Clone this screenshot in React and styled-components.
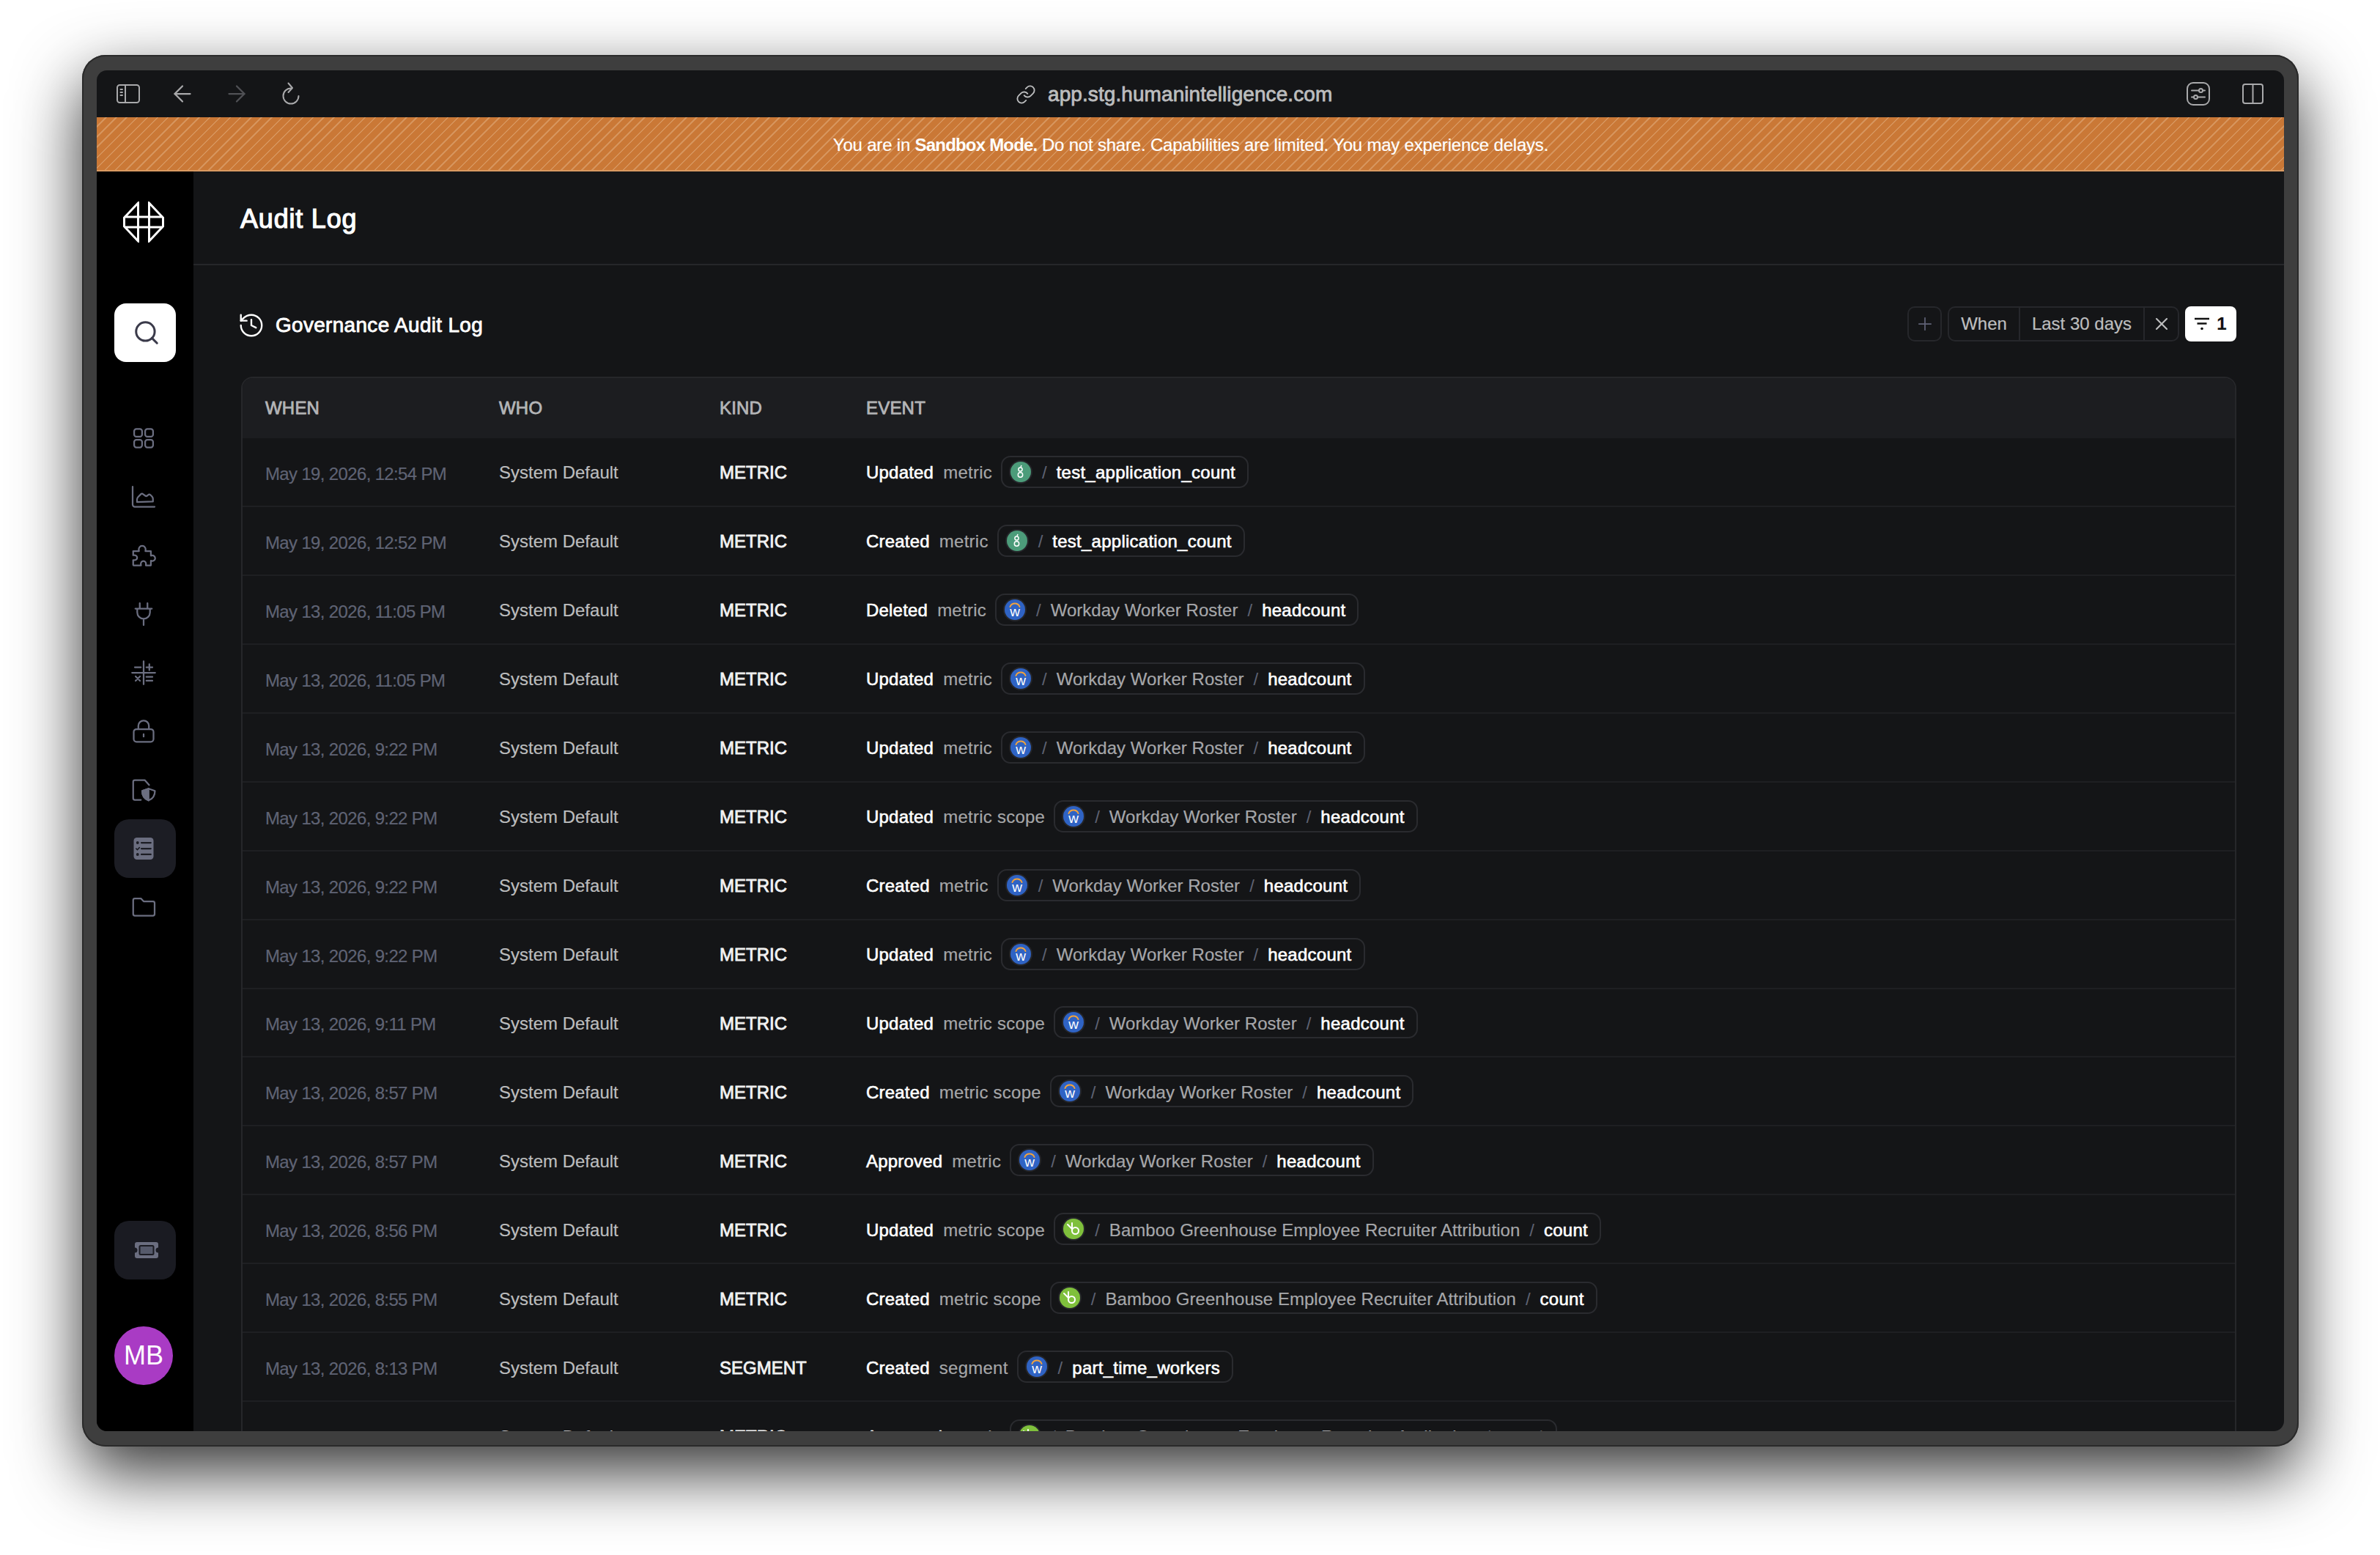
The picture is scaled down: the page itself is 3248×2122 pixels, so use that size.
import styled, { createGlobalStyle, css } from 'styled-components'
import { ArrowLeft, ArrowRight, History, Link, Plus, Search, X } from 'lucide-react'

const GlobalStyle = createGlobalStyle`
  html, body {
    margin: 0;
    background: #fff;
    font-family: "Liberation Sans", Arial, sans-serif;
  }
  * { box-sizing: border-box; }
`

const regular = css`
  -webkit-text-stroke: 0.2px currentColor;
`
const medium = css`
  -webkit-text-stroke: 0.6px currentColor;
`
const heavy = css`
  -webkit-text-stroke: 0.8px currentColor;
`

const Page = styled.div`
  width: 3248px;
  height: 2122px;
  padding: 75px 111px 148px 112px;
  overflow: hidden;
  background: #fff;
`
const Frame = styled.div`
  height: 100%;
  padding: 21px 20px;
  border-radius: 32px;
  background: #3e3e3e;
  box-shadow: inset 0 0 0 2px #2a2a2a, 0 35px 90px rgba(0, 0, 0, 0.8);
`
const Screen = styled.div`
  display: flex;
  flex-direction: column;
  height: 100%;
  overflow: hidden;
  border-radius: 14px;
  background: #141517;
`
const Toolbar = styled.div`
  flex: none;
  display: grid;
  grid-template-columns: 1248px 1fr auto;
  align-items: center;
  height: 64px;
  padding: 0 6px;
  color: #a9a9ab;
`
const ToolGroup = styled.div`
  display: flex;
  align-items: center;
`
const ToolButton = styled.div`
  display: flex;
  align-items: center;
  justify-content: center;
  width: 74px;
  color: ${(p) => (p.$dim ? '#505155' : 'inherit')};
`
const Url = styled.div`
  display: flex;
  align-items: center;
  gap: 16px;
  padding-top: 2px;
  font-size: 28px;
  letter-spacing: 0.08px;
  color: #bcbdbe;
  ${heavy}
`
const Banner = styled.div`
  flex: none;
  height: 74px;
  display: flex;
  align-items: center;
  justify-content: center;
  padding: 3px 0 0 1px;
  font-size: 24px;
  letter-spacing: -0.2px;
  color: #fff;
  border-bottom: 2px solid #d99a62;
  background: repeating-linear-gradient(135deg, #ca7836 0 8.2px, #d6945c 8.2px 10px);
  ${regular}
  b { font-weight: 700; letter-spacing: -0.8px; -webkit-text-stroke: 0; }
`
const Body = styled.div`
  flex: 1;
  min-height: 0;
  display: flex;
`
const Sidebar = styled.nav`
  flex: none;
  width: 132px;
  display: flex;
  flex-direction: column;
  align-items: flex-start;
  padding: 41px 0 63px 24px;
  background: #000;
`
const Logo = styled.svg`
  display: block;
  width: 56px;
  height: 56px;
  margin: 0 0 83px 12px;
  color: #fff;
`
const SearchButton = styled.div`
  display: flex;
  align-items: center;
  justify-content: center;
  width: 84px;
  height: 80px;
  margin-bottom: 64px;
  padding-left: 4px;
  border-radius: 16px;
  background: #fff;
  color: #3a3a4a;
`
const NavItem = styled.div`
  display: flex;
  align-items: center;
  justify-content: center;
  width: 84px;
  height: 80px;
  padding-right: 4px;
  border-radius: 20px;
  color: #6b6e80;
  background: ${(p) => (p.$active ? '#1c1d24' : 'transparent')};
`
const TicketButton = styled.div`
  display: flex;
  align-items: center;
  justify-content: center;
  width: 84px;
  height: 80px;
  margin-top: auto;
  margin-bottom: 64px;
  padding-left: 4px;
  border-radius: 20px;
  color: #6b6e80;
  background: #1a1b22;
`
const Avatar = styled.div`
  display: flex;
  align-items: center;
  justify-content: center;
  width: 80px;
  height: 80px;
  border-radius: 50%;
  background: #a93bc4;
  color: #fff;
  font-size: 36px;
`
const Main = styled.main`
  flex: 1;
  min-width: 0;
  display: flex;
  flex-direction: column;
`
const Header = styled.header`
  flex: none;
  display: flex;
  align-items: center;
  height: 128px;
  padding: 4px 64px 0;
  border-bottom: 2px solid #26272a;
`
const Title = styled.h1`
  margin: 0;
  font-size: 36px;
  font-weight: 400;
  color: #fff;
  letter-spacing: 0.8px;
  -webkit-text-stroke: 1.2px currentColor;
`
const Content = styled.div`
  flex: 1;
  min-height: 0;
  padding: 56px 65px 0;
`
const SectionBar = styled.div`
  display: flex;
  align-items: center;
  justify-content: space-between;
  height: 48px;
  margin-bottom: 48px;
`
const SectionTitle = styled.h2`
  display: flex;
  align-items: center;
  gap: 14px;
  margin: 3px 0 0 -5px;
  font-size: 28px;
  font-weight: 400;
  letter-spacing: 0.3px;
  color: #fff;
  ${heavy}
  svg { -webkit-text-stroke: 0; }
`
const Filters = styled.div`
  display: flex;
  align-items: stretch;
  gap: 8px;
  height: 48px;
  font-size: 24px;
  color: #bdbebf;
  ${regular}
`
const AddFilter = styled.div`
  display: flex;
  align-items: center;
  justify-content: center;
  width: 47px;
  border: 2px solid #26272b;
  border-radius: 10px;
  color: #5f6276;
`
const FilterGroup = styled.div`
  display: flex;
  border: 2px solid #26272b;
  border-radius: 10px;
`
const FilterPart = styled.div`
  display: flex;
  align-items: center;
  justify-content: center;
  padding: 0 16px;
  & + & { border-left: 2px solid #26272b; }
`
const FilterClose = styled(FilterPart)`
  width: 47px;
  padding: 0;
`
const FilterCount = styled.div`
  display: flex;
  align-items: center;
  justify-content: center;
  gap: 10px;
  width: 70px;
  border-radius: 8px;
  background: #fff;
  color: #111;
  font-weight: 700;
`
const Table = styled.div`
  border: 2px solid #26272a;
  border-bottom: 0;
  border-radius: 16px 16px 0 0;
  overflow: hidden;
`
const HeadRow = styled.div`
  display: grid;
  grid-template-columns: 319px 301px 200px 1fr;
  align-items: center;
  height: 82px;
  padding-left: 31px;
  background: #1c1d20;
  font-size: 24px;
  letter-spacing: 0.2px;
  color: #b4b5b7;
  ${heavy}
`
const Row = styled.div`
  display: grid;
  grid-template-columns: 319px 301px 200px 1fr;
  align-items: center;
  height: 93.95px;
  padding-left: 31px;
  border-bottom: 2px solid #1e1f22;
  font-size: 24px;
`
const When = styled.div`
  padding-top: 6px;
  letter-spacing: -0.65px;
  color: #5f6374;
  ${regular}
`
const Who = styled.div`
  padding-top: 3px;
  color: #bcbdbe;
  ${regular}
`
const Kind = styled.div`
  padding-top: 3px;
  color: #f2f2f2;
  ${heavy}
`
const Event = styled.div`
  display: flex;
  align-items: center;
`
const Verb = styled.span`
  margin-right: 13px;
  padding-top: 3px;
  letter-spacing: 0.2px;
  color: #fff;
  ${medium}
`
const Noun = styled.span`
  margin-right: 12px;
  padding-top: 3px;
  letter-spacing: 0.25px;
  color: #a5a6a8;
  ${regular}
`
const Pill = styled.div`
  display: flex;
  align-items: center;
  gap: 13px;
  height: 44px;
  padding: 0 16px 0 9px;
  border: 2px solid #2a2b2f;
  border-radius: 13px;
  white-space: nowrap;
`
const Source = styled.span`
  padding-top: 3px;
  letter-spacing: 0.03px;
  color: #a6a7aa;
  ${regular}
`
const Slash = styled.span`
  padding-top: 3px;
  color: #5e6272;
`
const Name = styled.span`
  padding-top: 3px;
  letter-spacing: 0.25px;
  color: #fff;
  ${medium}
`
const Badge = styled.svg`
  display: block;
  flex: none;
  width: 32px;
  height: 32px;
  border-radius: 50%;
  background: #25262a;
`

const Line = styled.svg`
  display: block;
  fill: none;
  stroke: currentColor;
  stroke-width: ${(p) => p.$sw || 1.5};
  stroke-linecap: round;
  stroke-linejoin: round;
`

const icon = (children) => (
  <Line width="36" height="36" viewBox="0 0 24 24">{children}</Line>
)

const GridIcon = () => icon(
  <>
    <rect x="3.4" y="3.6" width="7.2" height="7" rx="2" />
    <rect x="13.4" y="3.6" width="7.2" height="7" rx="2" />
    <rect x="3.4" y="13.4" width="7.2" height="7" rx="2" />
    <rect x="13.4" y="13.4" width="7.2" height="7" rx="2" />
  </>
)
const ChartIcon = () => icon(
  <>
    <path d="M2 2.800v16.200a2 2 0 0 0 2 2h18" />
    <path d="M6 16.800v-2.500c0-1 .5-1.700 1.100-2.300l2.400-2.400c.6-.6 1.400-.6 2 0l2 1.400c.5.4 1.200.4 1.700 0l1-.8c.6-.5 1.300-.5 1.900 0l1.500 1.500c.5.600.9 1.400.9 2.300v2.300z" />
  </>
)
const PuzzleIcon = () => icon(
  <path d="M2.500 8h5.300c-.8-3 .9-4.700 2.900-4.700s3.700 1.700 2.900 4.700h5v4.200c2.800-.8 3.900.9 3.900 2.300s-1.100 3.100-3.900 2.300V21h-4.600c.6-2.700-.7-3.900-2.200-3.900s-2.800 1.200-2.200 3.900H3a.5.5 0 0 1-.5-.5v-4.300c2.500.4 3.600-.9 3.600-2.200s-1.100-2.600-3.600-2.200z" />
)
const PlugIcon = () => icon(
  <path d="M8.500 2v4.500M15.500 2v4.500M4.500 7h15M6.200 7v3.500a5.800 5.800 0 0 0 11.600 0V7M12 16.500v5.500" />
)
const CalcIcon = () => icon(
  <path d="M12 1.500v21M1.500 12h21M4 7h5.500M14.500 7h5.500M17.200 4.300v5.400M4.700 15.300l4 4M8.700 15.300l-4 4M14.500 15.800h5.500M14.500 19.300h5.500" />
)
const LockIcon = () => icon(
  <>
    <rect x="3" y="10" width="18" height="11.500" rx="2.500" />
    <path d="M7.200 10V7a4.800 4.800 0 0 1 9.600 0v3M12 14.600v2.200" />
  </>
)
const FileShieldIcon = () => icon(
  <>
    <path d="M9.500 21H4a1.500 1.500 0 0 1-1.500-1.500V4.500A1.500 1.500 0 0 1 4 3h9l4 4.500" />
    <path d="M16.500 10.800l5.800 2c0 4.400-2 7.300-5.800 8.700-3.800-1.400-5.800-4.300-5.800-8.700z" fill="#000" />
    <path d="M16.500 10.800l-5.800 2c0 4.400 2 7.300 5.800 8.700z" fill="currentColor" />
  </>
)
const ChecklistIcon = () => (
  <svg width="36" height="36" viewBox="0 0 24 24" fill="none">
    <rect x="3" y="2" width="18" height="20" rx="2.800" fill="currentColor" />
    <path d="M10 6.700h8.500M10 12h8.500M10 17.300h8.500" stroke="#1c1d24" strokeWidth="1.500" strokeLinecap="round" />
    <circle cx="6.500" cy="6.700" r="1.300" fill="#1c1d24" />
    <circle cx="6.500" cy="17.300" r="1.300" fill="#1c1d24" />
    <path d="M5.200 12l1.100 1.100 1.900-2" stroke="#1c1d24" strokeWidth="1.100" strokeLinecap="round" />
  </svg>
)
const FolderIcon = () => icon(
  <path d="M2.500 5.500a1.500 1.500 0 0 1 1.500-1.500h5.500l2.500 2.700h8.500a1.500 1.500 0 0 1 1.500 1.500v10a1.500 1.500 0 0 1-1.500 1.500H4a1.500 1.500 0 0 1-1.500-1.500z" />
)
const TicketIcon = () => (
  <svg width="34" height="24" viewBox="0 0 34 24" fill="none">
    <path d="M4 1h26a3 3 0 0 1 3 3v4.500a3.500 3.500 0 0 0 0 7V20a3 3 0 0 1-3 3H4a3 3 0 0 1-3-3v-4.500a3.500 3.500 0 0 0 0-7V4a3 3 0 0 1 3-3z" fill="currentColor" />
    <rect x="7.500" y="6" width="19" height="12" rx="1.500" fill="#565a6b" stroke="#1a1b22" strokeWidth="2" />
  </svg>
)

const navIcons = [
  <GridIcon key="grid" />,
  <ChartIcon key="chart" />,
  <PuzzleIcon key="puzzle" />,
  <PlugIcon key="plug" />,
  <CalcIcon key="calc" />,
  <LockIcon key="lock" />,
  <FileShieldIcon key="file" />,
  <ChecklistIcon key="list" />,
  <FolderIcon key="folder" />,
]

const SidebarToggle = () => (
  <Line width="32" height="26" viewBox="0 0 32 26" $sw={2}>
    <rect x="1" y="1" width="30" height="24" rx="3.500" />
    <path d="M12 1v24M5.500 7h2.500M5.500 11h2.500M5.500 15h2.500" />
  </Line>
)
const Reload = () => (
  <Line width="26" height="32" viewBox="0 0 26 32" $sw={2}>
    <path d="M13 8.500A10.500 10.500 0 1 0 23.500 19" />
    <path d="M9.500 1.500l5.500 6.500-5.500 6" />
  </Line>
)
const SlidersBox = () => (
  <Line width="32" height="32" viewBox="0 0 32 32" $sw={2}>
    <rect x="1" y="1" width="30" height="30" rx="8" />
    <path d="M7 11.500h10M22 11.500h3M7 20.500h3M15 20.500h10" />
    <circle cx="19.500" cy="11.500" r="2.500" />
    <circle cx="12.500" cy="20.500" r="2.500" />
  </Line>
)
const PanelToggle = () => (
  <Line width="29" height="28" viewBox="0 0 29 28" $sw={2}>
    <rect x="1" y="1" width="27" height="26" rx="3" />
    <path d="M14.500 1v26" />
  </Line>
)
const FilterIcon = () => (
  <svg width="20" height="18" viewBox="0 0 20 18" fill="none">
    <path d="M0 2h20M3.500 8.500h13" stroke="#111" strokeWidth="2.400" />
    <circle cx="10" cy="15.500" r="1.800" fill="#111" />
  </svg>
)

const Workday = () => (
  <Badge viewBox="0 0 32 32">
    <circle cx="16" cy="16" r="14" fill="#2f63c4" />
    <path d="M9.500 12a7 7 0 0 1 13 0" fill="none" stroke="#f2a33c" strokeWidth="2" strokeLinecap="round" />
    <text x="16" y="25" textAnchor="middle" fontSize="19" fill="#fff" fontFamily="Liberation Sans">w</text>
  </Badge>
)
const Greenhouse = () => (
  <Badge viewBox="0 0 32 32">
    <circle cx="16" cy="16" r="14" fill="#4c9c7a" />
    <g fill="none" stroke="#fff" strokeWidth="1.500">
      <circle cx="15.500" cy="12.500" r="2.600" />
      <circle cx="15.500" cy="20" r="3.200" />
      <path d="M17 7l-1 2.500" />
    </g>
  </Badge>
)
const Bamboo = () => (
  <Badge viewBox="0 0 32 32">
    <circle cx="16" cy="16" r="14" fill="#7fc03c" />
    <g fill="none" stroke="#fff" strokeWidth="2" strokeLinecap="round">
      <circle cx="18.500" cy="18.500" r="4.500" />
      <path d="M14 8v10.500M8 10l6 6" />
    </g>
  </Badge>
)

const badges = { gh: <Greenhouse />, wd: <Workday />, bh: <Bamboo /> }

const workday = ['wd', 'Workday Worker Roster', 'headcount']
const bamboo = ['bh', 'Bamboo Greenhouse Employee Recruiter Attribution', 'count']
const test = ['gh', null, 'test_application_count']

const rows = [
  ['May 19, 2026, 12:54 PM', 'METRIC', 'Updated', 'metric', test],
  ['May 19, 2026, 12:52 PM', 'METRIC', 'Created', 'metric', test],
  ['May 13, 2026, 11:05 PM', 'METRIC', 'Deleted', 'metric', workday],
  ['May 13, 2026, 11:05 PM', 'METRIC', 'Updated', 'metric', workday],
  ['May 13, 2026, 9:22 PM', 'METRIC', 'Updated', 'metric', workday],
  ['May 13, 2026, 9:22 PM', 'METRIC', 'Updated', 'metric scope', workday],
  ['May 13, 2026, 9:22 PM', 'METRIC', 'Created', 'metric', workday],
  ['May 13, 2026, 9:22 PM', 'METRIC', 'Updated', 'metric', workday],
  ['May 13, 2026, 9:11 PM', 'METRIC', 'Updated', 'metric scope', workday],
  ['May 13, 2026, 8:57 PM', 'METRIC', 'Created', 'metric scope', workday],
  ['May 13, 2026, 8:57 PM', 'METRIC', 'Approved', 'metric', workday],
  ['May 13, 2026, 8:56 PM', 'METRIC', 'Updated', 'metric scope', bamboo],
  ['May 13, 2026, 8:55 PM', 'METRIC', 'Created', 'metric scope', bamboo],
  ['May 13, 2026, 8:13 PM', 'SEGMENT', 'Created', 'segment', ['wd', null, 'part_time_workers']],
  ['May 13, 2026, 7:44 PM', 'METRIC', 'Approved', 'metric', bamboo],
]

const App = () => (
  <Page>
    <GlobalStyle />
    <Frame>
      <Screen>
        <Toolbar>
          <ToolGroup>
            <ToolButton><SidebarToggle /></ToolButton>
            <ToolButton><ArrowLeft size={36} strokeWidth={1.5} /></ToolButton>
            <ToolButton $dim><ArrowRight size={36} strokeWidth={1.5} /></ToolButton>
            <ToolButton><Reload /></ToolButton>
          </ToolGroup>
          <Url>
            <Link size={28} strokeWidth={1.6} />
            app.stg.humanintelligence.com
          </Url>
          <ToolGroup>
            <ToolButton><SlidersBox /></ToolButton>
            <ToolButton><PanelToggle /></ToolButton>
          </ToolGroup>
        </Toolbar>
        <Banner>
          <span>You are in <b>Sandbox Mode.</b> Do not share. Capabilities are limited. You may experience delays.</span>
        </Banner>
        <Body>
          <Sidebar>
            <Logo viewBox="0 0 56 56" fill="none" stroke="currentColor" strokeWidth="3">
              <path d="M20.500 2L1.500 22v12l19 20V2zM35.500 2l19 20v12l-19 20V2zM1.500 21h53M1.500 35h53" />
            </Logo>
            <SearchButton><Search size={38} strokeWidth={1.900} /></SearchButton>
            {navIcons.map((item, i) => (
              <NavItem key={i} $active={i === 7}>{item}</NavItem>
            ))}
            <TicketButton><TicketIcon /></TicketButton>
            <Avatar>MB</Avatar>
          </Sidebar>
          <Main>
            <Header>
              <Title>Audit Log</Title>
            </Header>
            <Content>
              <SectionBar>
                <SectionTitle>
                  <History size={38} strokeWidth={1.500} />
                  Governance Audit Log
                </SectionTitle>
                <Filters>
                  <AddFilter><Plus size={28} strokeWidth={1.500} /></AddFilter>
                  <FilterGroup>
                    <FilterPart>When</FilterPart>
                    <FilterPart>Last 30 days</FilterPart>
                    <FilterClose><X size={28} strokeWidth={1.800} /></FilterClose>
                  </FilterGroup>
                  <FilterCount><FilterIcon />1</FilterCount>
                </Filters>
              </SectionBar>
              <Table>
                <HeadRow>
                  <div>WHEN</div>
                  <div>WHO</div>
                  <div>KIND</div>
                  <div>EVENT</div>
                </HeadRow>
                {rows.map(([when, kind, verb, noun, [badge, source, name]], i) => (
                  <Row key={i}>
                    <When>{when}</When>
                    <Who>System Default</Who>
                    <Kind>{kind}</Kind>
                    <Event>
                      <Verb>{verb}</Verb>
                      <Noun>{noun}</Noun>
                      <Pill>
                        {badges[badge]}
                        <Slash>/</Slash>
                        {source && <Source>{source}</Source>}
                        {source && <Slash>/</Slash>}
                        <Name>{name}</Name>
                      </Pill>
                    </Event>
                  </Row>
                ))}
              </Table>
            </Content>
          </Main>
        </Body>
      </Screen>
    </Frame>
  </Page>
)

export default App
